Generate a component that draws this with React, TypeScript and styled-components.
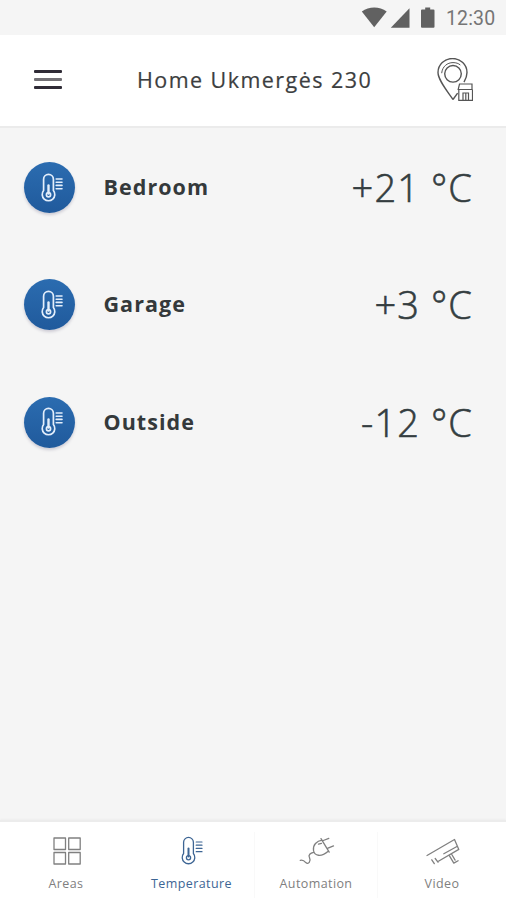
import React from "react";
import styled, { createGlobalStyle } from "styled-components";

const GlobalStyle = createGlobalStyle`
  * { box-sizing: border-box; }
  body { margin: 0; background: #f5f5f5; font-family: "Open Sans", sans-serif; }
`;

const Screen = styled.div`
  width: 506px;
  height: 900px;
  display: flex;
  flex-direction: column;
  overflow: hidden;
  background: #f5f5f5;
`;

const StatusBar = styled.div`
  height: 35px;
  flex: none;
  display: flex;
  align-items: center;
  justify-content: flex-end;
  padding-right: 10px;
  color: #616161;
`;

const StatusIcons = styled.svg`
  width: 76px;
  height: 22px;
  display: block;
`;

const Clock = styled.time`
  width: 50px;
  margin-left: 9px;
  padding-top: 1px;
  font: 400 19.5px/35px Roboto, sans-serif;
  letter-spacing: 0.15px;
  white-space: nowrap;
  color: #757575;
`;

const Header = styled.header`
  height: 93px;
  flex: none;
  display: flex;
  align-items: center;
  padding: 0 33px 2px 34px;
  background: #fff;
  border-bottom: 2px solid #ebebeb;
`;

const MenuButton = styled.button`
  width: 28px;
  height: 19px;
  padding: 0;
  border: 0;
  background: none;
  display: flex;
  flex-direction: column;
  justify-content: space-between;
`;

const MenuLine = styled.span<{ $tone: string }>`
  display: block;
  width: 28px;
  height: 3px;
  border-radius: 1px;
  background: ${(p) => p.$tone};
`;

const Title = styled.h1`
  flex: 1;
  margin: 0 0 0 75px;
  padding-top: 1px;
  font-size: 21.5px;
  line-height: 30px;
  font-weight: 400;
  letter-spacing: 1.45px;
  -webkit-text-stroke: 0.2px currentColor;
  white-space: nowrap;
  color: #3c3e40;
`;

const PinIcon = styled.svg`
  width: 38px;
  height: 44px;
  flex: none;
`;

const SensorList = styled.ul`
  flex: 1;
  margin: 0;
  padding: 1px 0 0;
  list-style: none;
`;

const SensorRow = styled.li`
  height: 117.3px;
  display: flex;
  align-items: center;
  padding: 0 33px 0 24px;
`;

const SensorBadge = styled.span`
  width: 51px;
  height: 51px;
  display: grid;
  place-items: center;
  padding-left: 4px;
  border-radius: 50%;
  color: #e3eefb;
  background: linear-gradient(#2b6cb0, #205a9c);
  box-shadow: 0 2px 3px rgba(70, 60, 100, 0.22);
`;

const SensorName = styled.span`
  margin: -1px 0 0 28.5px;
  flex: 1;
  font-size: 21.5px;
  line-height: 30px;
  font-weight: 700;
  letter-spacing: 1.05px;
  color: #34393b;
`;

const Reading = styled.span`
  margin-top: -1px;
  font-size: 38px;
  line-height: 50px;
  font-weight: 300;
  letter-spacing: 1.1px;
  -webkit-text-stroke: 0.6px currentColor;
  white-space: nowrap;
  color: #343d40;
`;

const TabBar = styled.nav`
  height: 80px;
  flex: none;
  display: grid;
  grid-template-columns: 131px 123px 123px 129px;
  background: #fff;
  border-top: 2px solid #ececec;
  box-shadow: 0 -1px 2px rgba(0, 0, 0, 0.03);
`;

const Tab = styled.button<{ $active?: boolean; $divided?: boolean }>`
  margin: 10px 0 0;
  height: 66px;
  padding: 0 ${(p) => (p.$active ? "3px" : "0")} 0 0;
  border: 0;
  border-left: 1px solid ${(p) => (p.$divided ? "#f9f9f9" : "transparent")};
  background: none;
  display: flex;
  flex-direction: column;
  align-items: center;
  color: ${(p) => (p.$active ? "#3d6594" : "#808080")};
`;

const TabIcon = styled.span`
  height: 40px;
  padding: 0 0 2px 1px;
  display: grid;
  place-items: center;
`;

const TabLabel = styled.span`
  padding-top: 1px;
  font: 400 12.5px/22px "Open Sans", sans-serif;
  letter-spacing: 0.4px;
`;

const Drawing = styled.svg`
  display: block;
  overflow: visible;
  fill: none;
  stroke: currentColor;
  stroke-linecap: round;
  stroke-linejoin: round;
`;

const Thermometer = ({ line = 1.7 }: { line?: number }) => (
  <Drawing width="22" height="30" viewBox="0 0 22 30" strokeWidth={line}>
    <path d="M2.6 17.5V6.3a4.9 4.9 0 0 1 9.8 0v11.2a6.3 6.3 0 1 1-9.8 0Z" />
    <circle cx="7.5" cy="21.8" r="2.1" />
    <path d="M7.5 12.5v8" strokeWidth={line + 0.7} />
    <path d="M15.2 6H21M15.2 9.2H21M15.2 12.4H21M15.2 15.7H21" strokeWidth={line - 0.1} />
  </Drawing>
);

const AreasIcon = () => (
  <Drawing width="28" height="28" viewBox="0 0 28 28" strokeWidth="1.3">
    <path d="M1 1h11.5v11.5H1ZM15.7 1h11.5v11.5H15.7ZM1 15.5h11.5V27H1ZM15.7 15.5h11.5V27H15.7Z" />
  </Drawing>
);

const PlugIcon = () => (
  <Drawing width="36" height="30" viewBox="0 0 36 30" strokeWidth="1.3">
    <path d="M22 2.6l8.2 13.5M23.2 4.2c-5.5.8-9.5 4.5-8.7 10.3 1 5.5 7.6 6.8 14.4 1M24.3 4.5l5.5-2.2M29 12.2l5.5-2.3M19.5 8.2l3-.9" />
    <path d="M14.6 16.3c-3.2.7-5.7 2.7-4.1 5.3 1.8 3.8-1.2 7.2-3.7 5-1.5-1.8-2.7-3-5.5-2.3" />
  </Drawing>
);

const CameraIcon = () => (
  <Drawing width="34" height="28" viewBox="0 0 34 28" strokeWidth="1.3">
    <path d="M1 18.5L28.5 2.5L32.8 12.4L12 24.5M17.8 16.8l12.7-7M5.8 22.8l2.5 3.8M9.2 21.5l2.8 3.7M23.5 18.8l4.3 7.3M25.8 17.5l3.3 5.6M27.8 26.1l4.3-2.4" />
  </Drawing>
);

const sensors = [
  { name: "Bedroom", value: "+21 °C" },
  { name: "Garage", value: "+3 °C" },
  { name: "Outside", value: "-12 °C" },
];

export default function App() {
  return (
    <Screen>
      <GlobalStyle />
      <StatusBar>
        <StatusIcons viewBox="0 0 76 22" fill="currentColor">
          <path d="M.8 4.5C8-.9 18.5-.9 25.7 4.5L13.2 20.3Z" />
          <path d="M48.5 1.3v19.4H29.8Z" />
          <path d="M64.2 .5h5v2h3.3q1 0 1 1v16.3q0 1-1 1H61q-1 0-1-1V3.5q0-1 1-1h3.2Z" />
        </StatusIcons>
        <Clock>12:30</Clock>
      </StatusBar>
      <Header>
        <MenuButton aria-label="Menu">
          <MenuLine $tone="#2f2b36" />
          <MenuLine $tone="#727075" />
          <MenuLine $tone="#2f2b36" />
        </MenuButton>
        <Title>Home Ukmergės 230</Title>
        <PinIcon viewBox="0 0 38 44" fill="none" stroke="#555" strokeWidth="1.4">
          <path d="M18 41.5C11 31.5 3 21.5 3 14.5a14.5 14 0 0 1 29 0c0 3.5-1.2 6.5-3 9.7M18 41.5l4.6-6.4" />
          <circle cx="18" cy="15.8" r="8.3" />
          <path d="M6.7 15.2C7.3 8.5 12.3 4.6 18 4.6c3 0 5.5.8 7.3 2.4" strokeWidth="1" />
          <path d="M24.5 26h12.5v5.5H23.2ZM23.8 31.5v10.8h13.7V31.5M28 42v-7h5.5V42M30.8 35.5V42" strokeWidth="1.2" />
        </PinIcon>
      </Header>
      <SensorList>
        {sensors.map((s) => (
          <SensorRow key={s.name}>
            <SensorBadge><Thermometer /></SensorBadge>
            <SensorName>{s.name}</SensorName>
            <Reading>{s.value}</Reading>
          </SensorRow>
        ))}
      </SensorList>
      <TabBar>
        <Tab><TabIcon><AreasIcon /></TabIcon><TabLabel>Areas</TabLabel></Tab>
        <Tab $active><TabIcon><Thermometer line={1.3} /></TabIcon><TabLabel>Temperature</TabLabel></Tab>
        <Tab $divided><TabIcon><PlugIcon /></TabIcon><TabLabel>Automation</TabLabel></Tab>
        <Tab $divided><TabIcon><CameraIcon /></TabIcon><TabLabel>Video</TabLabel></Tab>
      </TabBar>
    </Screen>
  );
}
